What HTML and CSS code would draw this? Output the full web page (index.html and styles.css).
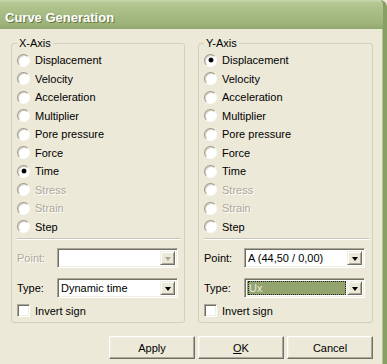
FILE: index.html
```html
<!DOCTYPE html>
<html lang="en">
<head>
    <meta charset="UTF-8">
    <title>Curve Generation</title>
    <link rel="stylesheet" href="styles.css">
</head>
<body>
    <div class="window">
        <div class="titlebar">Curve Generation</div>
        <div class="content">
            <div class="groups">
                <fieldset class="group">
                    <legend>X-Axis</legend>
                    <div class="options">
                        <label class="option"><span class="radio"></span>Displacement</label>
                        <label class="option"><span class="radio"></span>Velocity</label>
                        <label class="option"><span class="radio"></span>Acceleration</label>
                        <label class="option"><span class="radio"></span>Multiplier</label>
                        <label class="option"><span class="radio"></span>Pore pressure</label>
                        <label class="option"><span class="radio"></span>Force</label>
                        <label class="option"><span class="radio checked"></span>Time</label>
                        <label class="option disabled"><span class="radio"></span>Stress</label>
                        <label class="option disabled"><span class="radio"></span>Strain</label>
                        <label class="option"><span class="radio"></span>Step</label>
                    </div>
                    <div class="separator"></div>
                    <div class="field disabled">
                        <span class="field-label">Point:</span>
                        <div class="combo">
                            <span class="combo-value"></span>
                            <span class="combo-button"><span class="arrow"></span></span>
                        </div>
                    </div>
                    <div class="field">
                        <span class="field-label">Type:</span>
                        <div class="combo">
                            <span class="combo-value">Dynamic time</span>
                            <span class="combo-button"><span class="arrow"></span></span>
                        </div>
                    </div>
                    <label class="check"><span class="checkbox"></span>Invert sign</label>
                </fieldset>
                <fieldset class="group">
                    <legend>Y-Axis</legend>
                    <div class="options">
                        <label class="option"><span class="radio checked"></span>Displacement</label>
                        <label class="option"><span class="radio"></span>Velocity</label>
                        <label class="option"><span class="radio"></span>Acceleration</label>
                        <label class="option"><span class="radio"></span>Multiplier</label>
                        <label class="option"><span class="radio"></span>Pore pressure</label>
                        <label class="option"><span class="radio"></span>Force</label>
                        <label class="option"><span class="radio"></span>Time</label>
                        <label class="option disabled"><span class="radio"></span>Stress</label>
                        <label class="option disabled"><span class="radio"></span>Strain</label>
                        <label class="option"><span class="radio"></span>Step</label>
                    </div>
                    <div class="separator"></div>
                    <div class="field">
                        <span class="field-label">Point:</span>
                        <div class="combo">
                            <span class="combo-value">A (44,50 / 0,00)</span>
                            <span class="combo-button"><span class="arrow"></span></span>
                        </div>
                    </div>
                    <div class="field">
                        <span class="field-label">Type:</span>
                        <div class="combo">
                            <span class="combo-value selected"><span class="focus">Ux</span></span>
                            <span class="combo-button"><span class="arrow"></span></span>
                        </div>
                    </div>
                    <label class="check"><span class="checkbox"></span>Invert sign</label>
                </fieldset>
            </div>
            <div class="buttons">
                <button class="btn">Apply</button>
                <button class="btn"><u>O</u>K</button>
                <button class="btn">Cancel</button>
            </div>
        </div>
    </div>
</body>
</html>
```

FILE: styles.css
```css
body, html {
    margin: 0;
    width: 387px;
    height: 364px;
    overflow: hidden;
    background-color: #ece9d8;
    font-family: 'Liberation Sans', Arial, sans-serif;
    font-size: 11px;
    color: #000;
}
.window {
    display: flex;
    flex-direction: column;
    box-sizing: border-box;
    width: 387px;
    height: 364px;
    background-color: #ece9d8;
    border-right: 4px solid #86a063;
    border-top-right-radius: 7px;
    box-shadow: inset -1px 0 0 #b3c595;
}
.titlebar {
    height: 29px;
    flex: none;
    display: flex;
    align-items: center;
    padding-left: 5px;
    padding-top: 5px;
    box-sizing: border-box;
    background: linear-gradient(#cad7af 0, #b5c792 3px, #a8bc85 45%, #9fb47b 80%, #93a86f 100%);
    border-top-right-radius: 6px;
    color: #fff;
    font-weight: bold;
    font-size: 13px;
    text-shadow: 1px 1px 0 #66763f;
}
.content {
    flex: 1;
    padding: 8px 10px 0 11px;
}
.groups {
    display: grid;
    grid-template-columns: 174px 175px;
    column-gap: 13px;
}
.group {
    margin: 0;
    padding: 0 3px 5px 5px;
    min-width: 0;
    border: 1px solid #d0d0bf;
    border-radius: 3px;
}
.group legend {
    padding: 0 2px;
    line-height: 13px;
}
.options {
    padding-top: 1px;
}
.option {
    display: flex;
    align-items: center;
    height: 18.5px;
}
.option.disabled {
    color: #aca899;
    text-shadow: 1px 1px 0 #fff;
}
.radio {
    box-sizing: border-box;
    width: 13px;
    height: 13px;
    margin-right: 5px;
    border-radius: 50%;
    background: radial-gradient(circle at 60% 60%, #fff 55%, #e4e2d8 100%);
    border: 1px solid;
    border-color: #9d9a8c #fdfdfb #fdfdfb #9d9a8c;
    box-shadow: inset 1px 1px 0 #d6d3c6;
    display: flex;
    align-items: center;
    justify-content: center;
}
.radio.checked::after {
    content: '';
    width: 4px;
    height: 4px;
    border-radius: 50%;
    background: #000;
    box-shadow: 0 0 0 0.5px #333;
}
.separator {
    margin: 2px 0 0 0;
    border-top: 1px solid #c8c5b6;
    border-bottom: 1px solid #fff;
}
.field {
    display: flex;
    align-items: center;
    margin-top: 8px;
}
.field + .field {
    margin-top: 10px;
}
.field-label {
    width: 40px;
}
.field.disabled .field-label {
    color: #aca899;
    text-shadow: 1px 1px 0 #fff;
}
.combo {
    box-sizing: border-box;
    width: 121px;
    height: 20px;
    display: flex;
    background: #fff;
    border: 1px solid;
    border-color: #aca899 #fff #fff #aca899;
    box-shadow: inset 1px 1px 0 #716f64, inset -1px -1px 0 #f1efe2;
    padding: 2px;
}
.combo-value {
    flex: 1;
    display: flex;
    align-items: center;
    padding-left: 1px;
    white-space: nowrap;
    overflow: hidden;
}
.combo-value.selected {
    background: #94a46f;
    color: #e6e8dc;
    margin-right: 1px;
}
.focus {
    display: flex;
    align-items: center;
    width: 100%;
    height: 100%;
    box-sizing: border-box;
    outline: 1px dotted #222;
    outline-offset: -1px;
    padding-left: 1px;
}
.combo-button {
    width: 15px;
    box-sizing: border-box;
    background: #ece9d8;
    border: 1px solid;
    border-color: #f1efe2 #716f64 #716f64 #f1efe2;
    box-shadow: inset 1px 1px 0 #fff, inset -1px -1px 0 #aca899;
    display: flex;
    align-items: center;
    justify-content: center;
}
.arrow {
    width: 0;
    height: 0;
    border-left: 3.5px solid transparent;
    border-right: 3.5px solid transparent;
    border-top: 4px solid #000;
    margin-top: 1px;
}
.field.disabled .arrow {
    border-top-color: #aca899;
}
.check {
    display: flex;
    align-items: center;
    margin-top: 6px;
    height: 13px;
}
.checkbox {
    box-sizing: border-box;
    width: 13px;
    height: 13px;
    margin-right: 5px;
    background: #fff;
    border: 1px solid;
    border-color: #aca899 #fff #fff #aca899;
    box-shadow: inset 1px 1px 0 #716f64, inset -1px -1px 0 #f1efe2;
}
.buttons {
    display: flex;
    justify-content: flex-end;
    gap: 3px;
    margin-top: 13px;
}
.btn {
    box-sizing: border-box;
    width: 86px;
    height: 23px;
    padding: 0;
    background: #ece9d8;
    font-family: 'Liberation Sans', Arial, sans-serif;
    font-size: 11px;
    color: #000;
    border: 1px solid;
    border-color: #fff #716f64 #716f64 #fff;
    box-shadow: inset -1px -1px 0 #aca899, inset 1px 1px 0 #f1efe2;
}
```
